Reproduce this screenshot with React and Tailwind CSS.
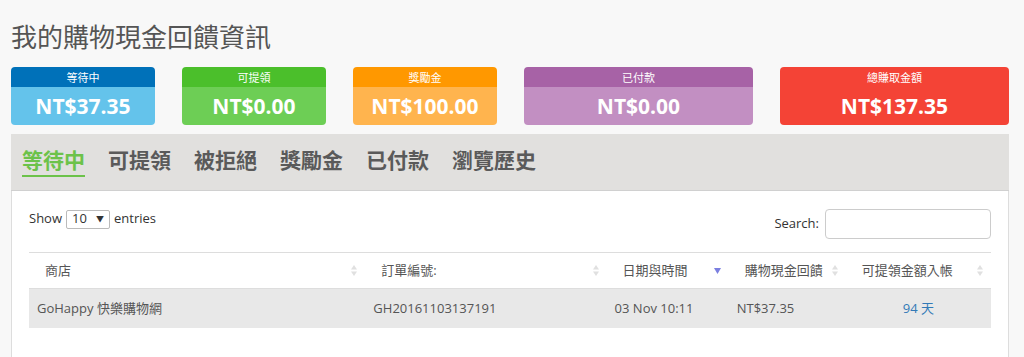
const cards = [
  { label: '等待中', amount: 'NT$37.35', head: 'bg-[#0071b9]', body: 'bg-[#64c3eb]', w: 'w-[144px]' },
  { label: '可提領', amount: 'NT$0.00', head: 'bg-[#4bbf2b]', body: 'bg-[#6dce55]', w: 'w-[144px]' },
  { label: '獎勵金', amount: 'NT$100.00', head: 'bg-[#ff9800]', body: 'bg-[#ffb44e]', w: 'w-[144px]' },
  { label: '已付款', amount: 'NT$0.00', head: 'bg-[#a762a6]', body: 'bg-[#c28fc2]', w: 'w-[229px]' },
  { label: '總賺取金額', amount: 'NT$137.35', head: 'bg-[#f44336]', body: 'bg-[#f44336]', w: 'w-[229px]' },
];

const tabs = ['等待中', '可提領', '被拒絕', '獎勵金', '已付款', '瀏覽歷史'];

const cols = [
  { title: '商店', w: 'w-[336px]' },
  { title: '訂單編號:', w: 'w-[241px]' },
  { title: '日期與時間', w: 'w-[122px]', sorted: true },
  { title: '購物現金回饋', w: 'w-[117px]' },
  { title: '可提領金額入帳', w: 'w-[145px]' },
];

function SortIcon({ active }) {
  if (active) {
    return (
      <svg width="7" height="6" viewBox="0 0 7 6">
        <path d="M0 0 L7 0 L3.5 6 Z" fill="#7b7fe0" />
      </svg>
    );
  }
  return (
    <svg width="6" height="11" viewBox="0 0 6 11">
      <path d="M0 4.5 L3 0 L6 4.5 Z" fill="#e0e0e0" />
      <path d="M0 6.5 L6 6.5 L3 11 Z" fill="#e0e0e0" />
    </svg>
  );
}

export default function App() {
  return (
    <div
      className="min-h-[357px] bg-[#f8f8f8] text-[#333]"
      style={{ fontFamily: "'Open Sans', 'Noto Sans CJK TC', sans-serif" }}
    >
      <div className="w-[998px] ml-[11px] pt-[19px]">
        <h1 className="text-[26px] leading-[36px] text-[#555] font-normal">我的購物現金回饋資訊</h1>

        {/* summary cards */}
        <div className="flex gap-[27px] mt-[12px]">
          {cards.map((c) => (
            <div key={c.label} className={`${c.w} rounded-[4px] overflow-hidden text-white text-center`}>
              <div className={`${c.head} h-[20px] text-[11px] leading-[21px]`}>{c.label}</div>
              <div className={`${c.body} h-[38px] text-[21px] leading-[38px] font-bold`}>{c.amount}</div>
            </div>
          ))}
        </div>

        {/* tabs */}
        <div className="mt-[9px] bg-[#e1e0de] h-[57px] border-b border-[#d0d0d0] flex items-start gap-[23px] pl-[11px] pt-[12px]">
          {tabs.map((t, i) => (
            <div
              key={t}
              className={`text-[21px] leading-[28px] font-bold pb-[1px] ${
                i === 0 ? 'text-[#6cc24a] border-b-2 border-[#6cc24a]' : 'text-[#5a5a5a]'
              }`}
            >
              {t}
            </div>
          ))}
        </div>

        {/* table panel */}
        <div className="bg-white border-x border-[#dddddd] h-[167px] px-[17px] pt-[18px]">
          <div className="flex justify-between items-start text-[13px]">
            <div className="flex items-center gap-[4px] h-[20px]">
              <span>Show</span>
              <div className="w-[44px] h-[19px] border border-[#bbb] rounded-[2px] flex items-center justify-between px-[5px] text-[13px]">
                <span>10</span>
                <span className="text-[8px]">▼</span>
              </div>
              <span>entries</span>
            </div>
            <div className="flex items-center gap-[6px]">
              <span>Search:</span>
              <div className="w-[166px] h-[30px] border border-[#ccc] rounded-[4px] bg-white" />
            </div>
          </div>

          <table className="mt-[13px] w-[962px] table-fixed border-collapse text-[13px]">
            <thead>
              <tr className="border-t border-[#ddd] border-b border-[#ddd]">
                {cols.map((c) => (
                  <th key={c.title} className={`${c.w} h-[36px] font-normal text-[#555] text-left pl-[16px] pr-[8px]`}>
                    <div className="flex items-center justify-between">
                      <span>{c.title}</span>
                      <SortIcon active={c.sorted} />
                    </div>
                  </th>
                ))}
              </tr>
            </thead>
            <tbody>
              <tr className="bg-[#e8e8e8] h-[39px] text-[#555]">
                <td className="pl-[8px]">GoHappy 快樂購物網</td>
                <td className="pl-[8px]">GH20161103137191</td>
                <td className="pl-[8px]">03 Nov 10:11</td>
                <td className="pl-[8px]">NT$37.35</td>
                <td className="text-center text-[#337ab7]">94 天</td>
              </tr>
            </tbody>
          </table>
        </div>
      </div>
    </div>
  );
}
